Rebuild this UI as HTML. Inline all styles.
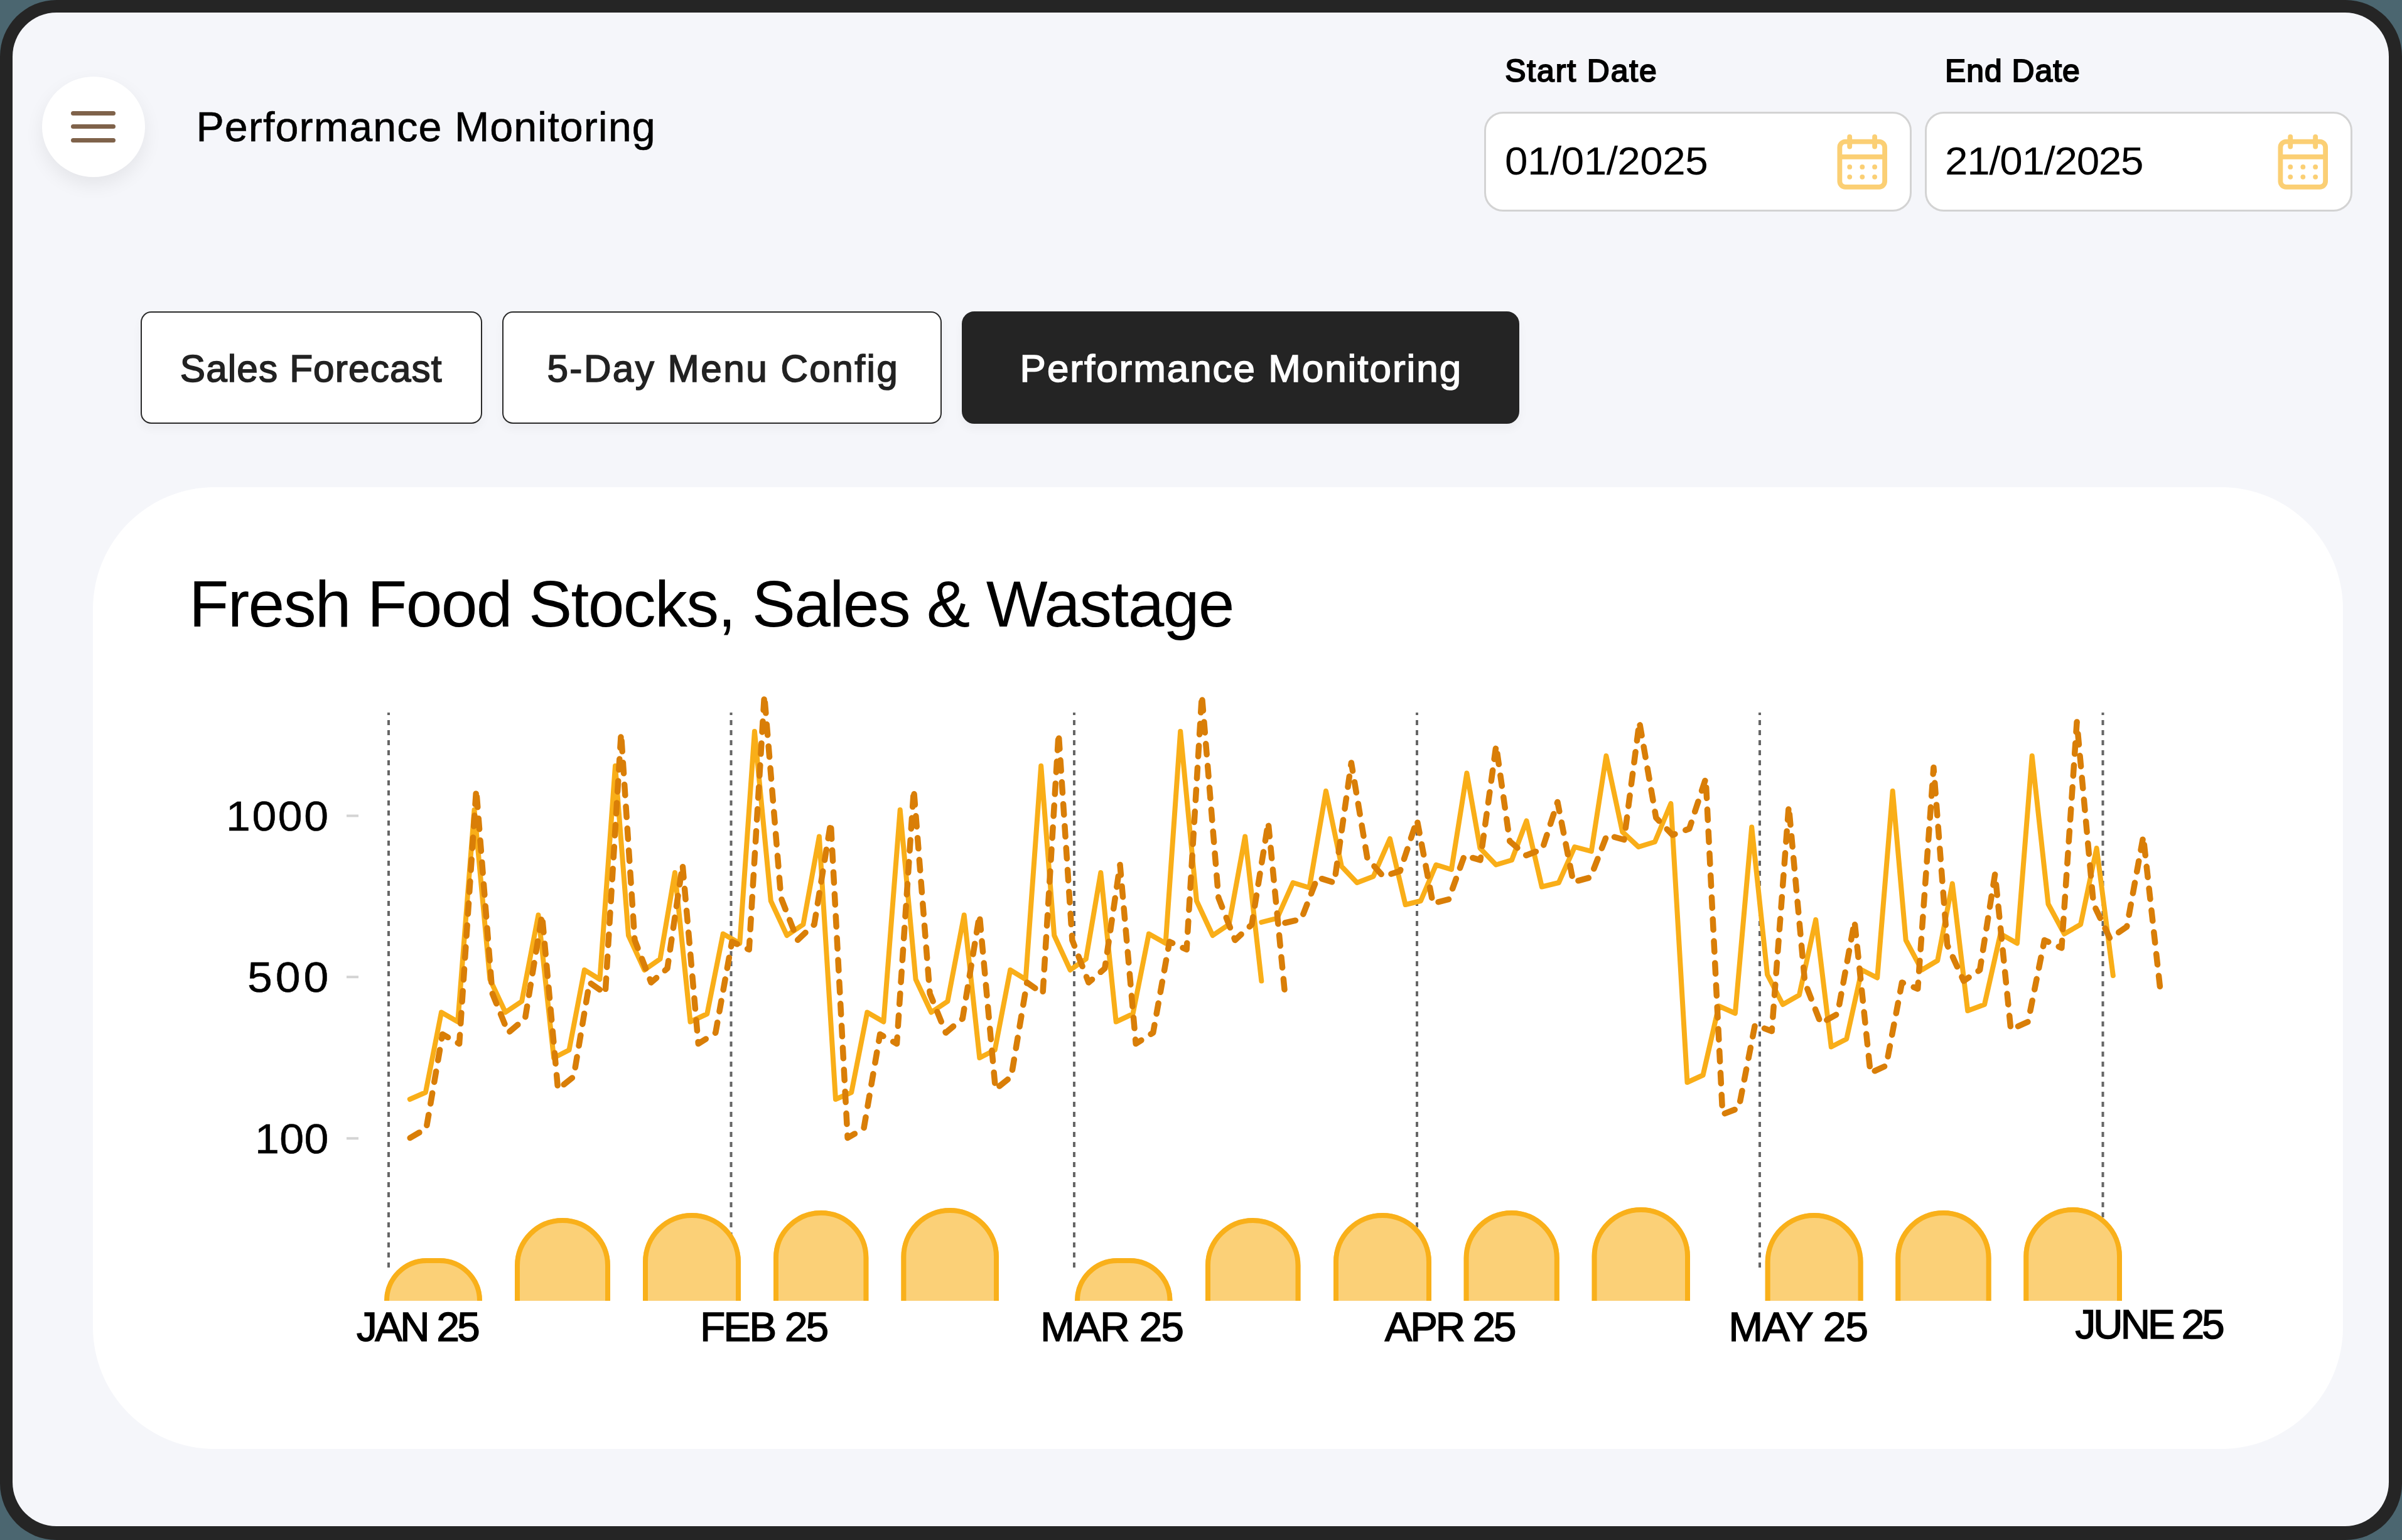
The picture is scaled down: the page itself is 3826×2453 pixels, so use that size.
<!DOCTYPE html>
<html><head><meta charset="utf-8"><title>Performance Monitoring</title>
<style>
html,body{margin:0;padding:0;}
body{width:3826px;height:2453px;overflow:hidden;background:#4b6670;position:relative;font-family:"Liberation Sans",sans-serif;}
.frame{position:absolute;left:0;top:0;width:3826px;height:2453px;background:#252525;border-radius:90px;}
.screen{position:absolute;left:20px;top:20px;width:3785px;height:2411px;background:#f5f6fa;border-radius:70px;}
.t{position:absolute;white-space:nowrap;line-height:1;}
.burger{position:absolute;left:67px;top:122px;width:164px;height:159.5px;border-radius:50%;background:#fff;box-shadow:0 12px 30px rgba(0,0,0,0.07);}
.bl{position:absolute;left:113px;width:71px;height:7px;border-radius:4px;background:#7f624a;}
.inp{position:absolute;top:178px;width:675px;height:153px;border:3.5px solid #d3d3d3;border-radius:30px;background:#fff;}
.cal{position:absolute;top:214px;}
.tab{position:absolute;top:496px;height:175px;border:2px solid #2a2a2a;border-radius:17px;background:#fff;box-shadow:0 8px 16px rgba(0,0,0,0.04);}
.tab.on{background:#242424;border-color:#242424;border-radius:20px;}
.card{position:absolute;left:148px;top:776px;width:3584px;height:1532px;border-radius:194px;background:#fff;}
svg.chart{position:absolute;left:0;top:0;}
</style></head><body>
<div class="frame"></div>
<div class="screen"></div>
<div class="burger"></div>
<div class="bl" style="top:177px"></div><div class="bl" style="top:198px"></div><div class="bl" style="top:219.6px"></div>
<div class="t" style="left:312.5px;top:169.4px;font-size:66.42px;font-weight:400;letter-spacing:1.07px;color:#000;-webkit-text-stroke:0.6px #000;">Performance Monitoring</div>
<div class="t" style="left:2397.2px;top:88.9px;font-size:49.85px;font-weight:400;letter-spacing:1.91px;color:#000;-webkit-text-stroke:2.0px #000;">Start Date</div>
<div class="t" style="left:3097.9px;top:88.9px;font-size:49.85px;font-weight:400;letter-spacing:1.01px;color:#000;-webkit-text-stroke:2.0px #000;">End Date</div>
<div class="inp" style="left:2364px"></div>
<div class="inp" style="left:3066px"></div>
<div class="t" style="left:2396.6px;top:225.3px;font-size:62.5px;font-weight:400;letter-spacing:-0.49px;color:#000;transform:scaleX(1.05);transform-origin:0 0;">01/01/2025</div>
<div class="t" style="left:3097.9px;top:225.3px;font-size:62.5px;font-weight:400;letter-spacing:-1.26px;color:#000;transform:scaleX(1.05);transform-origin:0 0;">21/01/2025</div>
<svg class="cal" style="left:2926px" width="80" height="90" viewBox="0 0 80 90">
<g fill="none" stroke="#fbcf74" stroke-width="7.8" stroke-linecap="round">
<rect x="4.4" y="11.7" width="71.7" height="72.1" rx="9"/>
<line x1="4.4" y1="35.9" x2="76.1" y2="35.9" stroke-linecap="butt"/>
<line x1="20.2" y1="4" x2="20.2" y2="19.5"/><line x1="60.1" y1="4" x2="60.1" y2="19.5"/>
</g><g fill="#fbcf74">
<circle cx="20.2" cy="51.9" r="3.9"/><circle cx="40.3" cy="51.9" r="3.9"/><circle cx="60.1" cy="51.9" r="3.9"/>
<circle cx="20.2" cy="67.8" r="3.9"/><circle cx="40.3" cy="67.8" r="3.9"/><circle cx="60.1" cy="67.8" r="3.9"/>
</g></svg>
<svg class="cal" style="left:3628px" width="80" height="90" viewBox="0 0 80 90">
<g fill="none" stroke="#fbcf74" stroke-width="7.8" stroke-linecap="round">
<rect x="4.4" y="11.7" width="71.7" height="72.1" rx="9"/>
<line x1="4.4" y1="35.9" x2="76.1" y2="35.9" stroke-linecap="butt"/>
<line x1="20.2" y1="4" x2="20.2" y2="19.5"/><line x1="60.1" y1="4" x2="60.1" y2="19.5"/>
</g><g fill="#fbcf74">
<circle cx="20.2" cy="51.9" r="3.9"/><circle cx="40.3" cy="51.9" r="3.9"/><circle cx="60.1" cy="51.9" r="3.9"/>
<circle cx="20.2" cy="67.8" r="3.9"/><circle cx="40.3" cy="67.8" r="3.9"/><circle cx="60.1" cy="67.8" r="3.9"/>
</g></svg>
<div class="tab" style="left:224px;width:540px"></div>
<div class="tab" style="left:800px;width:696px"></div>
<div class="tab on" style="left:1532px;width:884px"></div>
<div class="t" style="left:286.8px;top:556.6px;font-size:60.32px;font-weight:400;letter-spacing:1.12px;color:#222;-webkit-text-stroke:1.6px #222;">Sales Forecast</div>
<div class="t" style="left:871.4px;top:556.6px;font-size:60.32px;font-weight:400;letter-spacing:2.43px;color:#222;-webkit-text-stroke:1.6px #222;">5-Day Menu Config</div>
<div class="t" style="left:1624.6px;top:555.8px;font-size:61.92px;font-weight:400;letter-spacing:2.0px;color:#fff;-webkit-text-stroke:1.6px #fff;">Performance Monitoring</div>
<div class="card"></div>
<div class="t" style="left:301.0px;top:910.6px;font-size:103.78px;font-weight:400;letter-spacing:-1.67px;color:#000;">Fresh Food Stocks, Sales &amp; Wastage</div>
<div class="t" style="left:360.3px;top:1266.1px;font-size:67.15px;font-weight:400;letter-spacing:2.47px;color:#000;-webkit-text-stroke:0.5px #000;transform:scaleX(1.04);transform-origin:0 0;">1000</div>
<div class="t" style="left:394.3px;top:1522.5px;font-size:68.9px;font-weight:400;letter-spacing:4.66px;color:#000;-webkit-text-stroke:0.5px #000;transform:scaleX(1.04);transform-origin:0 0;">500</div>
<div class="t" style="left:406.3px;top:1780.3px;font-size:67.3px;font-weight:400;letter-spacing:0.34px;color:#000;-webkit-text-stroke:0.5px #000;transform:scaleX(1.04);transform-origin:0 0;">100</div>
<svg class="chart" width="3826" height="2453" viewBox="0 0 3826 2453">
<line x1="619" y1="1135" x2="619" y2="2022" stroke="#666" stroke-width="4" stroke-dasharray="8 8" stroke-dashoffset="4"/><line x1="1164.5" y1="1135" x2="1164.5" y2="2022" stroke="#666" stroke-width="4" stroke-dasharray="8 8" stroke-dashoffset="4"/><line x1="1711" y1="1135" x2="1711" y2="2022" stroke="#666" stroke-width="4" stroke-dasharray="8 8" stroke-dashoffset="4"/><line x1="2257" y1="1135" x2="2257" y2="2022" stroke="#666" stroke-width="4" stroke-dasharray="8 8" stroke-dashoffset="4"/><line x1="2803" y1="1135" x2="2803" y2="2022" stroke="#666" stroke-width="4" stroke-dasharray="8 8" stroke-dashoffset="4"/><line x1="3349.5" y1="1135" x2="3349.5" y2="2022" stroke="#666" stroke-width="4" stroke-dasharray="8 8" stroke-dashoffset="4"/><line x1="552" y1="1299.5" x2="571" y2="1299.5" stroke="#d4d4d4" stroke-width="4"/><line x1="552" y1="1556.2" x2="571" y2="1556.2" stroke="#d4d4d4" stroke-width="4"/><line x1="552" y1="1813.3" x2="571" y2="1813.3" stroke="#d4d4d4" stroke-width="4"/>
<path d="M612,2072 L612,2072 A68,68 0 0 1 680,2004 L700,2004 A68,68 0 0 1 768,2072 L768,2072 Z" fill="#fbd077"/><path d="M616.0,2072 L616.0,2072 A64.0,64.0 0 0 1 680,2008.0 L700,2008.0 A64.0,64.0 0 0 1 764.0,2072 L764.0,2072" fill="none" stroke="#f9b01a" stroke-width="8"/><path d="M820,2072 L820,2016.0 A76.0,76.0 0 0 1 896.0,1940 L896.0,1940 A76.0,76.0 0 0 1 972,2016.0 L972,2072 Z" fill="#fbd077"/><path d="M824.0,2072 L824.0,2016.0 A72.0,72.0 0 0 1 896.0,1944.0 L896.0,1944.0 A72.0,72.0 0 0 1 968.0,2016.0 L968.0,2072" fill="none" stroke="#f9b01a" stroke-width="8"/><path d="M1024,2072 L1024,2010.0 A78.0,78.0 0 0 1 1102.0,1932 L1102.0,1932 A78.0,78.0 0 0 1 1180,2010.0 L1180,2072 Z" fill="#fbd077"/><path d="M1028.0,2072 L1028.0,2010.0 A74.0,74.0 0 0 1 1102.0,1936.0 L1102.0,1936.0 A74.0,74.0 0 0 1 1176.0,2010.0 L1176.0,2072" fill="none" stroke="#f9b01a" stroke-width="8"/><path d="M1232,2072 L1232,2003.7 A75.70000000000005,75.70000000000005 0 0 1 1307.7,1928 L1307.7,1928 A75.70000000000005,75.70000000000005 0 0 1 1383.4,2003.7 L1383.4,2072 Z" fill="#fbd077"/><path d="M1236.0,2072 L1236.0,2003.7 A71.70000000000005,71.70000000000005 0 0 1 1307.7,1932.0 L1307.7,1932.0 A71.70000000000005,71.70000000000005 0 0 1 1379.4,2003.7 L1379.4,2072" fill="none" stroke="#f9b01a" stroke-width="8"/><path d="M1435.4,2072 L1435.4,2001.8 A77.79999999999995,77.79999999999995 0 0 1 1513.2,1924 L1513.2,1924 A77.79999999999995,77.79999999999995 0 0 1 1591,2001.8 L1591,2072 Z" fill="#fbd077"/><path d="M1439.4,2072 L1439.4,2001.8 A73.79999999999995,73.79999999999995 0 0 1 1513.2,1928.0 L1513.2,1928.0 A73.79999999999995,73.79999999999995 0 0 1 1587.0,2001.8 L1587.0,2072" fill="none" stroke="#f9b01a" stroke-width="8"/><path d="M1712,2072 L1712,2072 A68,68 0 0 1 1780,2004 L1799.5,2004 A68,68 0 0 1 1867.5,2072 L1867.5,2072 Z" fill="#fbd077"/><path d="M1716.0,2072 L1716.0,2072 A64.0,64.0 0 0 1 1780,2008.0 L1799.5,2008.0 A64.0,64.0 0 0 1 1863.5,2072 L1863.5,2072" fill="none" stroke="#f9b01a" stroke-width="8"/><path d="M1920,2072 L1920,2015.75 A75.75,75.75 0 0 1 1995.75,1940 L1995.75,1940 A75.75,75.75 0 0 1 2071.5,2015.75 L2071.5,2072 Z" fill="#fbd077"/><path d="M1924.0,2072 L1924.0,2015.75 A71.75,71.75 0 0 1 1995.75,1944.0 L1995.75,1944.0 A71.75,71.75 0 0 1 2067.5,2015.75 L2067.5,2072" fill="none" stroke="#f9b01a" stroke-width="8"/><path d="M2124,2072 L2124,2010.0 A78.0,78.0 0 0 1 2202.0,1932 L2202.0,1932 A78.0,78.0 0 0 1 2280,2010.0 L2280,2072 Z" fill="#fbd077"/><path d="M2128.0,2072 L2128.0,2010.0 A74.0,74.0 0 0 1 2202.0,1936.0 L2202.0,1936.0 A74.0,74.0 0 0 1 2276.0,2010.0 L2276.0,2072" fill="none" stroke="#f9b01a" stroke-width="8"/><path d="M2331.6,2072 L2331.6,2004.1000000000001 A76.10000000000014,76.10000000000014 0 0 1 2407.7,1928 L2407.7,1928 A76.10000000000014,76.10000000000014 0 0 1 2483.8,2004.1000000000001 L2483.8,2072 Z" fill="#fbd077"/><path d="M2335.6,2072 L2335.6,2004.1000000000001 A72.10000000000014,72.10000000000014 0 0 1 2407.7,1932.0 L2407.7,1932.0 A72.10000000000014,72.10000000000014 0 0 1 2479.8,2004.1000000000001 L2479.8,2072" fill="none" stroke="#f9b01a" stroke-width="8"/><path d="M2535.6,2072 L2535.6,2001.2 A78.20000000000005,78.20000000000005 0 0 1 2613.8,1923 L2613.8,1923 A78.20000000000005,78.20000000000005 0 0 1 2692,2001.2 L2692,2072 Z" fill="#fbd077"/><path d="M2539.6,2072 L2539.6,2001.2 A74.20000000000005,74.20000000000005 0 0 1 2613.8,1927.0 L2613.8,1927.0 A74.20000000000005,74.20000000000005 0 0 1 2688.0,2001.2 L2688.0,2072" fill="none" stroke="#f9b01a" stroke-width="8"/><path d="M2811.7,2072 L2811.7,2009.95 A77.95000000000005,77.95000000000005 0 0 1 2889.6499999999996,1932 L2889.6499999999996,1932 A77.95000000000005,77.95000000000005 0 0 1 2967.6,2009.95 L2967.6,2072 Z" fill="#fbd077"/><path d="M2815.7,2072 L2815.7,2009.95 A73.95000000000005,73.95000000000005 0 0 1 2889.6499999999996,1936.0 L2889.6499999999996,1936.0 A73.95000000000005,73.95000000000005 0 0 1 2963.6,2009.95 L2963.6,2072" fill="none" stroke="#f9b01a" stroke-width="8"/><path d="M3019.3,2072 L3019.3,2004.1499999999999 A76.14999999999986,76.14999999999986 0 0 1 3095.45,1928 L3095.45,1928 A76.14999999999986,76.14999999999986 0 0 1 3171.6,2004.1499999999999 L3171.6,2072 Z" fill="#fbd077"/><path d="M3023.3,2072 L3023.3,2004.1499999999999 A72.14999999999986,72.14999999999986 0 0 1 3095.45,1932.0 L3095.45,1932.0 A72.14999999999986,72.14999999999986 0 0 1 3167.6,2004.1499999999999 L3167.6,2072" fill="none" stroke="#f9b01a" stroke-width="8"/><path d="M3223.3,2072 L3223.3,2001.35 A78.34999999999991,78.34999999999991 0 0 1 3301.65,1923 L3301.65,1923 A78.34999999999991,78.34999999999991 0 0 1 3380,2001.35 L3380,2072 Z" fill="#fbd077"/><path d="M3227.3,2072 L3227.3,2001.35 A74.34999999999991,74.34999999999991 0 0 1 3301.65,1927.0 L3301.65,1927.0 A74.34999999999991,74.34999999999991 0 0 1 3376.0,2001.35 L3376.0,2072" fill="none" stroke="#f9b01a" stroke-width="8"/>
<path d="M652.8,1751.0 L677.9,1740.0 L703.0,1612.5 L729.2,1627.5 L755.5,1290.0 L780.4,1560.0 L805.0,1612.5 L831.1,1595.0 L857.5,1457.5 L882.1,1685.0 L906.5,1672.5 L930.9,1545.0 L955.4,1560.0 L980.0,1220.0 L1001.0,1490.0 L1026.4,1545.0 L1051.5,1527.5 L1075.0,1390.0 L1099.5,1627.5 L1126.3,1615.0 L1151.7,1487.5 L1178.3,1502.5 L1201.9,1165.0 L1227.8,1435.0 L1253.4,1490.0 L1279.4,1472.5 L1304.9,1332.5 L1331.0,1751.0 L1356.2,1740.0 L1381.3,1612.5 L1407.4,1627.5 L1433.7,1290.0 L1458.6,1560.0 L1483.3,1612.5 L1509.4,1595.0 L1535.7,1457.5 L1560.3,1685.0 L1584.7,1672.5 L1609.2,1545.0 L1633.7,1560.0 L1658.2,1220.0 L1679.2,1490.0 L1704.6,1545.0 L1729.8,1527.5 L1753.3,1390.0 L1777.7,1627.5 L1804.5,1615.0 L1829.9,1487.5 L1856.6,1502.5 L1880.2,1165.0 L1906.0,1435.0 L1931.6,1490.0 L1957.6,1472.5 L1983.2,1332.5 L2009.3,1562.6 M2009.3,1469.0 L2034.4,1462.5 L2059.5,1406.0 L2085.6,1414.0 L2112.0,1260.0 L2136.9,1380.0 L2161.5,1406.0 L2187.6,1396.0 L2213.9,1336.0 L2238.6,1441.0 L2263.0,1435.0 L2287.4,1377.5 L2311.9,1385.0 L2336.4,1231.5 L2357.5,1351.0 L2382.9,1377.5 L2408.0,1370.0 L2431.5,1307.5 L2455.9,1412.5 L2482.8,1406.0 L2508.2,1349.0 L2534.8,1356.0 L2558.4,1204.0 L2584.2,1325.0 L2609.9,1349.0 L2635.9,1341.0 L2661.4,1280.0 L2687.5,1724.0 L2712.6,1712.5 L2737.8,1602.5 L2763.9,1614.0 L2790.2,1317.5 L2815.1,1552.5 L2839.7,1600.0 L2865.9,1585.0 L2892.2,1465.0 L2916.8,1667.5 L2941.2,1655.0 L2965.6,1545.0 L2990.2,1557.5 L3014.7,1260.0 L3035.7,1497.5 L3061.1,1545.0 L3086.2,1530.0 L3109.8,1407.5 L3134.2,1610.0 L3161.0,1600.0 L3186.4,1487.5 L3213.0,1502.5 L3236.7,1204.0 L3262.5,1440.0 L3288.1,1487.5 L3314.1,1472.5 L3339.6,1351.0 L3365.8,1554.0" fill="none" stroke="#f9ae18" stroke-width="8" stroke-linejoin="round" stroke-linecap="round"/>
<path d="M653.2,1812.5 L679.0,1797.5 L704.8,1647.5 L731.6,1662.5 L758.6,1257.5 L784.2,1582.5 L809.6,1645.0 L836.4,1622.5 L863.4,1457.5 L888.7,1735.0 L913.8,1715.0 L938.9,1565.0 L964.1,1582.5 L989.3,1168.0 L1011.0,1497.5 L1037.1,1565.0 L1063.0,1542.5 L1087.2,1377.5 L1112.3,1662.5 L1139.8,1645.0 L1165.9,1500.0 L1193.2,1512.5 L1217.5,1107.5 L1244.0,1430.0 L1270.3,1497.5 L1297.0,1472.5 L1323.3,1310.0 L1350.1,1812.5 L1375.9,1797.5 L1401.7,1647.5 L1428.5,1662.5 L1455.5,1257.5 L1481.1,1582.5 L1506.4,1645.0 L1533.2,1622.5 L1560.2,1457.5 L1585.6,1735.0 L1610.7,1715.0 L1635.8,1565.0 L1661.0,1582.5 L1686.2,1168.0 L1707.9,1497.5 L1734.0,1565.0 L1759.8,1542.5 L1784.0,1377.5 L1809.2,1662.5 L1836.7,1645.0 L1862.8,1500.0 L1890.1,1512.5 L1914.4,1107.5 L1940.9,1430.0 L1967.2,1497.5 L1993.9,1472.5 L2020.1,1310.0 L2046.9,1585.5" fill="none" stroke="#d97e07" stroke-width="9.5" stroke-linejoin="round" stroke-linecap="round" stroke-dasharray="17 18"/>
<path d="M2046.9,1470.0 L2072.8,1464.0 L2098.6,1397.5 L2125.4,1406.0 L2152.4,1215.0 L2178.0,1367.5 L2203.3,1396.0 L2230.1,1387.5 L2257.1,1306.0 L2282.4,1439.0 L2307.5,1432.5 L2332.7,1362.5 L2357.9,1370.0 L2383.1,1187.5 L2404.8,1340.0 L2430.9,1362.5 L2456.7,1352.5 L2480.9,1277.5 L2506.0,1405.0 L2533.5,1397.5 L2559.6,1330.0 L2586.9,1337.5 L2611.3,1150.0 L2637.8,1302.5 L2664.1,1330.0 L2690.8,1320.0 L2717.0,1240.0 L2743.8,1775.0 L2769.6,1765.0 L2795.4,1632.5 L2822.2,1642.5 L2849.2,1284.0 L2874.9,1565.0 L2900.2,1630.0 L2927.0,1615.0 L2954.0,1467.5 L2979.3,1709.0 L3004.4,1697.5 L3029.5,1565.0 L3054.7,1575.0 L3079.9,1222.5 L3101.6,1505.0 L3127.8,1562.5 L3153.6,1545.0 L3177.8,1392.0 L3202.9,1640.0 L3230.4,1627.5 L3256.5,1497.5 L3283.8,1510.0 L3308.1,1150.0 L3334.6,1440.0 L3360.9,1495.0 L3387.7,1476.0 L3413.9,1332.5 L3440.7,1574.0" fill="none" stroke="#d97e07" stroke-width="9.5" stroke-linejoin="round" stroke-linecap="round" stroke-dasharray="17 18"/>
</svg>
<div class="t" style="left:568.0px;top:2081.4px;font-size:65.41px;font-weight:400;letter-spacing:-3.56px;color:#000;-webkit-text-stroke:1.5px #000;">JAN 25</div>
<div class="t" style="left:1115.3px;top:2081.4px;font-size:65.41px;font-weight:400;letter-spacing:-2.66px;color:#000;-webkit-text-stroke:1.5px #000;">FEB 25</div>
<div class="t" style="left:1657.2px;top:2081.4px;font-size:65.41px;font-weight:400;letter-spacing:-1.5px;color:#000;-webkit-text-stroke:1.5px #000;">MAR 25</div>
<div class="t" style="left:2205.8px;top:2081.4px;font-size:65.41px;font-weight:400;letter-spacing:-3.16px;color:#000;-webkit-text-stroke:1.5px #000;">APR 25</div>
<div class="t" style="left:2753.5px;top:2081.4px;font-size:65.41px;font-weight:400;letter-spacing:-0.84px;color:#000;-webkit-text-stroke:1.5px #000;">MAY 25</div>
<div class="t" style="left:3305.6px;top:2076.9px;font-size:65.41px;font-weight:400;letter-spacing:-3.95px;color:#000;-webkit-text-stroke:1.5px #000;">JUNE 25</div>
</body></html>
